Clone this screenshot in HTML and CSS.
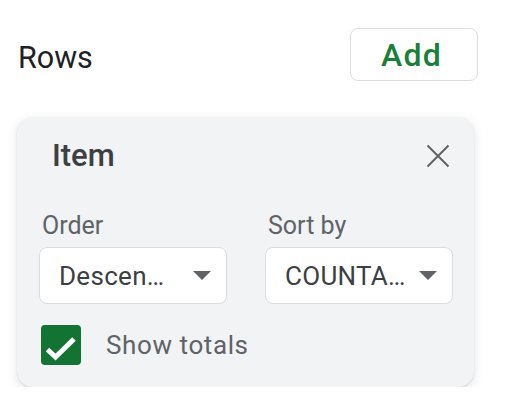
FILE: index.html
```html
<!DOCTYPE html>
<html lang="en">
<head>
<meta charset="utf-8">
<title>Rows</title>
<link rel="stylesheet" href="styles.css">
</head>
<body>
<div class="panel">
  <div class="header">
    <div class="rows-title">Rows</div>
    <button class="add-btn">Add</button>
  </div>
  <div class="card">
    <div class="card-head">
      <div class="item-title">Item</div>
      <svg class="close" width="24" height="24" viewBox="0 0 24 24"><path d="M1.5 1.5L22.5 22.5M22.5 1.5L1.5 22.5" stroke="#5f6368" stroke-width="2" fill="none"/></svg>
    </div>
    <div class="fields">
      <div class="field">
        <div class="label">Order</div>
        <div class="select"><span class="value">Descen…</span><span class="arrow"></span></div>
      </div>
      <div class="field">
        <div class="label">Sort by</div>
        <div class="select"><span class="value">COUNTA…</span><span class="arrow"></span></div>
      </div>
    </div>
    <div class="check-row">
      <span class="checkbox"><svg width="40" height="40" viewBox="0 0 40 40"><polyline points="6.5,24.5 14.5,32 33,14" fill="none" stroke="#fff" stroke-width="5"/></svg></span>
      <span class="check-label">Show totals</span>
    </div>
  </div>
</div>
</body>
</html>
```

FILE: styles.css
```css
html, body {
  margin: 0;
  background: #ffffff;
  font-family: Roboto, "Liberation Sans", sans-serif;
}
.panel {
  padding: 28px 35px 0 17px;
}
.header {
  display: flex;
  justify-content: space-between;
  align-items: flex-start;
  padding-left: 1px;
}
.rows-title {
  margin-top: 12px;
  font-size: 30.5px;
  line-height: 36px;
  color: #202124;
}
.add-btn {
  width: 128px;
  height: 53px;
  box-sizing: border-box;
  border: 1.5px solid #dadce0;
  border-radius: 8px;
  background: #ffffff;
  color: #188038;
  font-family: Roboto, "Liberation Sans", sans-serif;
  font-weight: 500;
  font-size: 32px;
  letter-spacing: 1.2px;
  display: flex;
  align-items: center;
  justify-content: center;
  padding: 0 5px 0 0;
}
.card {
  margin-top: 36px;
  margin-right: 4px;
  background: #f1f3f4;
  border-radius: 16px;
  padding: 19px 21px 22px 22px;
  box-shadow: 0 1px 2px rgba(60, 64, 67, 0.14), 0 3px 9px 2px rgba(60, 64, 67, 0.09);
}
.card-head {
  height: 40px;
  display: flex;
  justify-content: space-between;
  align-items: center;
  padding: 0 3px 0 13px;
}
.item-title {
  font-size: 31px;
  font-weight: 500;
  line-height: 40px;
  color: #3c4043;
}
.close {
  display: block;
}
.fields {
  margin-top: 36px;
  display: grid;
  grid-template-columns: 188px 188px;
  column-gap: 38px;
}
.label {
  font-size: 25px;
  line-height: 28px;
  color: #5f6368;
  padding-left: 3px;
}
.select {
  margin-top: 7px;
  height: 57px;
  box-sizing: border-box;
  border: 1.5px solid #dadce0;
  border-radius: 8px;
  background: #ffffff;
  padding: 0 15px 0 19px;
  display: flex;
  align-items: center;
  justify-content: space-between;
}
.value {
  font-size: 26px;
  letter-spacing: 0.3px;
  color: #3c4043;
  white-space: nowrap;
}
.arrow {
  width: 0;
  height: 0;
  border-left: 9px solid transparent;
  border-right: 9px solid transparent;
  border-top: 9px solid #5f6368;
}
.check-row {
  margin-top: 21px;
  display: flex;
  align-items: center;
  gap: 25px;
  padding-left: 2px;
}
.checkbox {
  width: 40px;
  height: 40px;
  background: #137333;
  border-radius: 4px;
  display: block;
}
.checkbox svg {
  display: block;
}
.check-label {
  font-size: 26px;
  letter-spacing: 0.6px;
  color: #5f6368;
}
```
